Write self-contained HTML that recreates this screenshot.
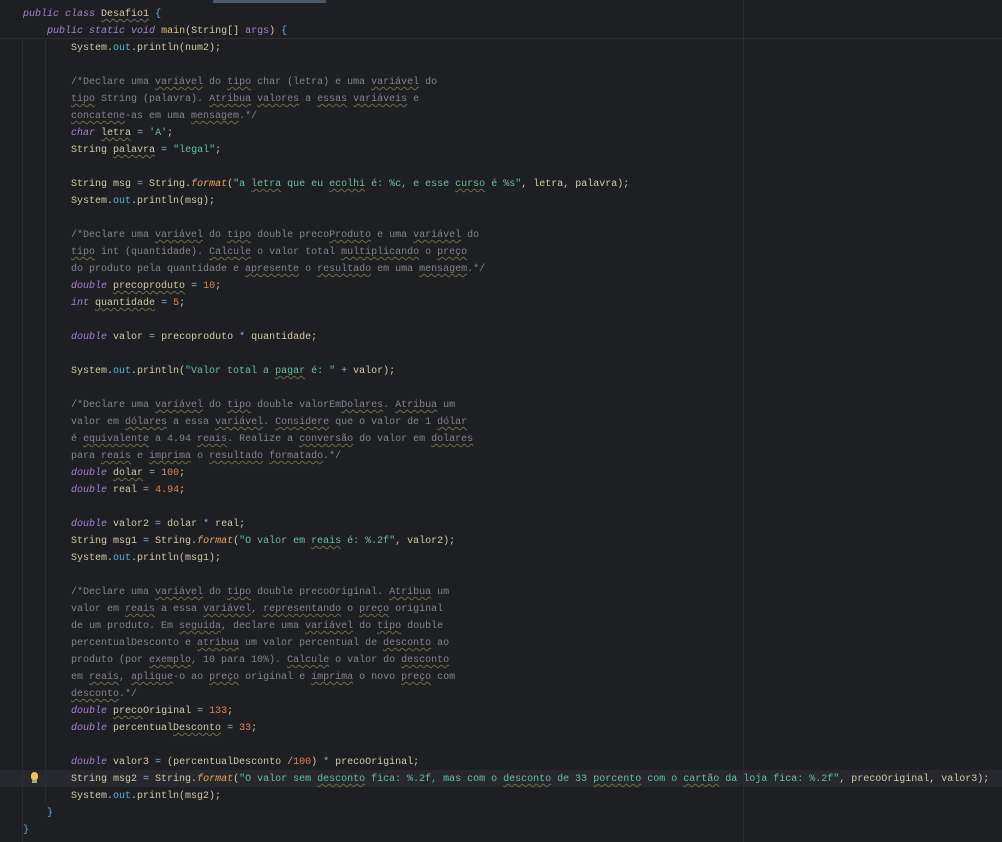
<!DOCTYPE html>
<html><head><meta charset="utf-8"><style>
html,body{margin:0;padding:0;background:#1e1f22;width:1002px;height:842px;overflow:hidden;}
body{position:relative;font-family:"Liberation Mono","DejaVu Sans Mono",monospace;font-size:10px;color:#d2c9a5;}
.sep{position:absolute;left:0;top:38px;width:1002px;height:1px;background:#2b2d30;}
.thumb{position:absolute;left:213px;top:0;width:113px;height:3px;background:#4c5a6b;border-radius:1px;}
.g{position:absolute;width:1px;background:#2b2d30;}
.margin{position:absolute;left:743px;top:0;width:1px;height:842px;background:#2a2c30;}
.cur{position:absolute;left:0;top:770px;width:1002px;height:17px;background:#26282e;}
.bulb{position:absolute;left:31px;top:772px;width:7px;height:8px;background:#f0c24a;border-radius:4px 4px 3px 3px;}
.bulb2{position:absolute;left:32px;top:780px;width:5px;height:3px;background:#9aa0a8;}
pre{position:absolute;left:23px;top:6px;margin:0;font:inherit;line-height:17px;white-space:pre;}
.k{color:#a87fd6;font-style:italic}
.kk{color:#a87fd6}
.s{color:#62c29b}
.n{color:#e2824a}
.c{color:#80848c}
.f{color:#4fb6e6}
.m{color:#e8a85c;font-style:italic}
.mn{color:#e0c070}
.o{color:#8fb3d6}
.b{color:#5ab4e6}
.t{text-decoration:underline wavy #6e6a45;text-decoration-thickness:1px;text-underline-offset:2px}
</style></head><body>
<div class="thumb"></div>
<div class="sep"></div>
<div class="cur"></div>
<div class="margin"></div>
<div class="g" style="left:22px;top:39px;height:803px"></div>
<div class="g" style="left:45px;top:39px;height:764px"></div>
<div class="bulb"></div><div class="bulb2"></div>
<pre><span class="k">public class</span> <span class="t">Desafio1</span> <span class="b">{</span>
    <span class="k">public static void</span> <span class="mn">main</span>(String[] <span class="kk">args</span>) <span class="b">{</span>
        System.<span class="f">out</span>.println(num2);

<span class="c">        /*Declare uma <span class="t">variável</span> do <span class="t">tipo</span> char (letra) e uma <span class="t">variável</span> do
        <span class="t">tipo</span> String (palavra). <span class="t">Atribua</span> <span class="t">valores</span> a <span class="t">essas</span> <span class="t">variáveis</span> e
        <span class="t">concatene</span>-as em uma <span class="t">mensagem</span>.*/</span>
        <span class="k">char</span> <span class="t">letra</span> <span class="o">=</span> <span class="s">'A'</span>;
        String <span class="t">palavra</span> <span class="o">=</span> <span class="s">"legal"</span>;

        String msg <span class="o">=</span> String.<span class="m">format</span>(<span class="s">"a <span class="t">letra</span> que eu <span class="t">ecolhi</span> é: %c, e esse <span class="t">curso</span> é %s"</span>, letra, palavra);
        System.<span class="f">out</span>.println(msg);

<span class="c">        /*Declare uma <span class="t">variável</span> do <span class="t">tipo</span> double preco<span class="t">Produto</span> e uma <span class="t">variável</span> do
        <span class="t">tipo</span> int (quantidade). <span class="t">Calcule</span> o valor total <span class="t">multiplicando</span> o <span class="t">preço</span>
        do produto pela quantidade e <span class="t">apresente</span> o <span class="t">resultado</span> em uma <span class="t">mensagem</span>.*/</span>
        <span class="k">double</span> <span class="t">precoproduto</span> <span class="o">=</span> <span class="n">10</span>;
        <span class="k">int</span> <span class="t">quantidade</span> <span class="o">=</span> <span class="n">5</span>;

        <span class="k">double</span> valor <span class="o">=</span> precoproduto <span class="o">*</span> quantidade;

        System.<span class="f">out</span>.println(<span class="s">"Valor total a <span class="t">pagar</span> é: "</span> <span class="o">+</span> valor);

<span class="c">        /*Declare uma <span class="t">variável</span> do <span class="t">tipo</span> double valorEm<span class="t">Dolares</span>. <span class="t">Atribua</span> um
        valor em <span class="t">dólares</span> a essa <span class="t">variável</span>. <span class="t">Considere</span> que o valor de 1 <span class="t">dólar</span>
        é <span class="t">equivalente</span> a 4.94 <span class="t">reais</span>. Realize a <span class="t">conversão</span> do valor em <span class="t">dolares</span>
        para <span class="t">reais</span> e <span class="t">imprima</span> o <span class="t">resultado</span> <span class="t">formatado</span>.*/</span>
        <span class="k">double</span> <span class="t">dolar</span> <span class="o">=</span> <span class="n">100</span>;
        <span class="k">double</span> real <span class="o">=</span> <span class="n">4.94</span>;

        <span class="k">double</span> valor2 <span class="o">=</span> dolar <span class="o">*</span> real;
        String msg1 <span class="o">=</span> String.<span class="m">format</span>(<span class="s">"O valor em <span class="t">reais</span> é: %.2f"</span>, valor2);
        System.<span class="f">out</span>.println(msg1);

<span class="c">        /*Declare uma <span class="t">variável</span> do <span class="t">tipo</span> double precoOriginal. <span class="t">Atribua</span> um
        valor em <span class="t">reais</span> a essa <span class="t">variável</span>, <span class="t">representando</span> o <span class="t">preço</span> original
        de um produto. Em <span class="t">seguida</span>, declare uma <span class="t">variável</span> do <span class="t">tipo</span> double
        percentualDesconto e <span class="t">atribua</span> um valor percentual de <span class="t">desconto</span> ao
        produto (por <span class="t">exemplo</span>, 10 para 10%). <span class="t">Calcule</span> o valor do <span class="t">desconto</span>
        em <span class="t">reais</span>, <span class="t">aplique</span>-o ao <span class="t">preço</span> original e <span class="t">imprima</span> o novo <span class="t">preço</span> com
        <span class="t">desconto</span>.*/</span>
        <span class="k">double</span> <span class="t">preco</span>Original <span class="o">=</span> <span class="n">133</span>;
        <span class="k">double</span> percentual<span class="t">Desconto</span> <span class="o">=</span> <span class="n">33</span>;

        <span class="k">double</span> valor3 <span class="o">=</span> (percentualDesconto <span class="o">/</span><span class="n">100</span>) <span class="o">*</span> precoOriginal;
        String msg2 <span class="o">=</span> String.<span class="m">format</span>(<span class="s">"O valor sem <span class="t">desconto</span> fica: %.2f, mas com o <span class="t">desconto</span> de 33 <span class="t">porcento</span> com o <span class="t">cartão</span> da loja fica: %.2f"</span>, precoOriginal, valor3);
        System.<span class="f">out</span>.println(msg2);
    <span class="b">}</span>
<span class="b">}</span></pre>
</body></html>
